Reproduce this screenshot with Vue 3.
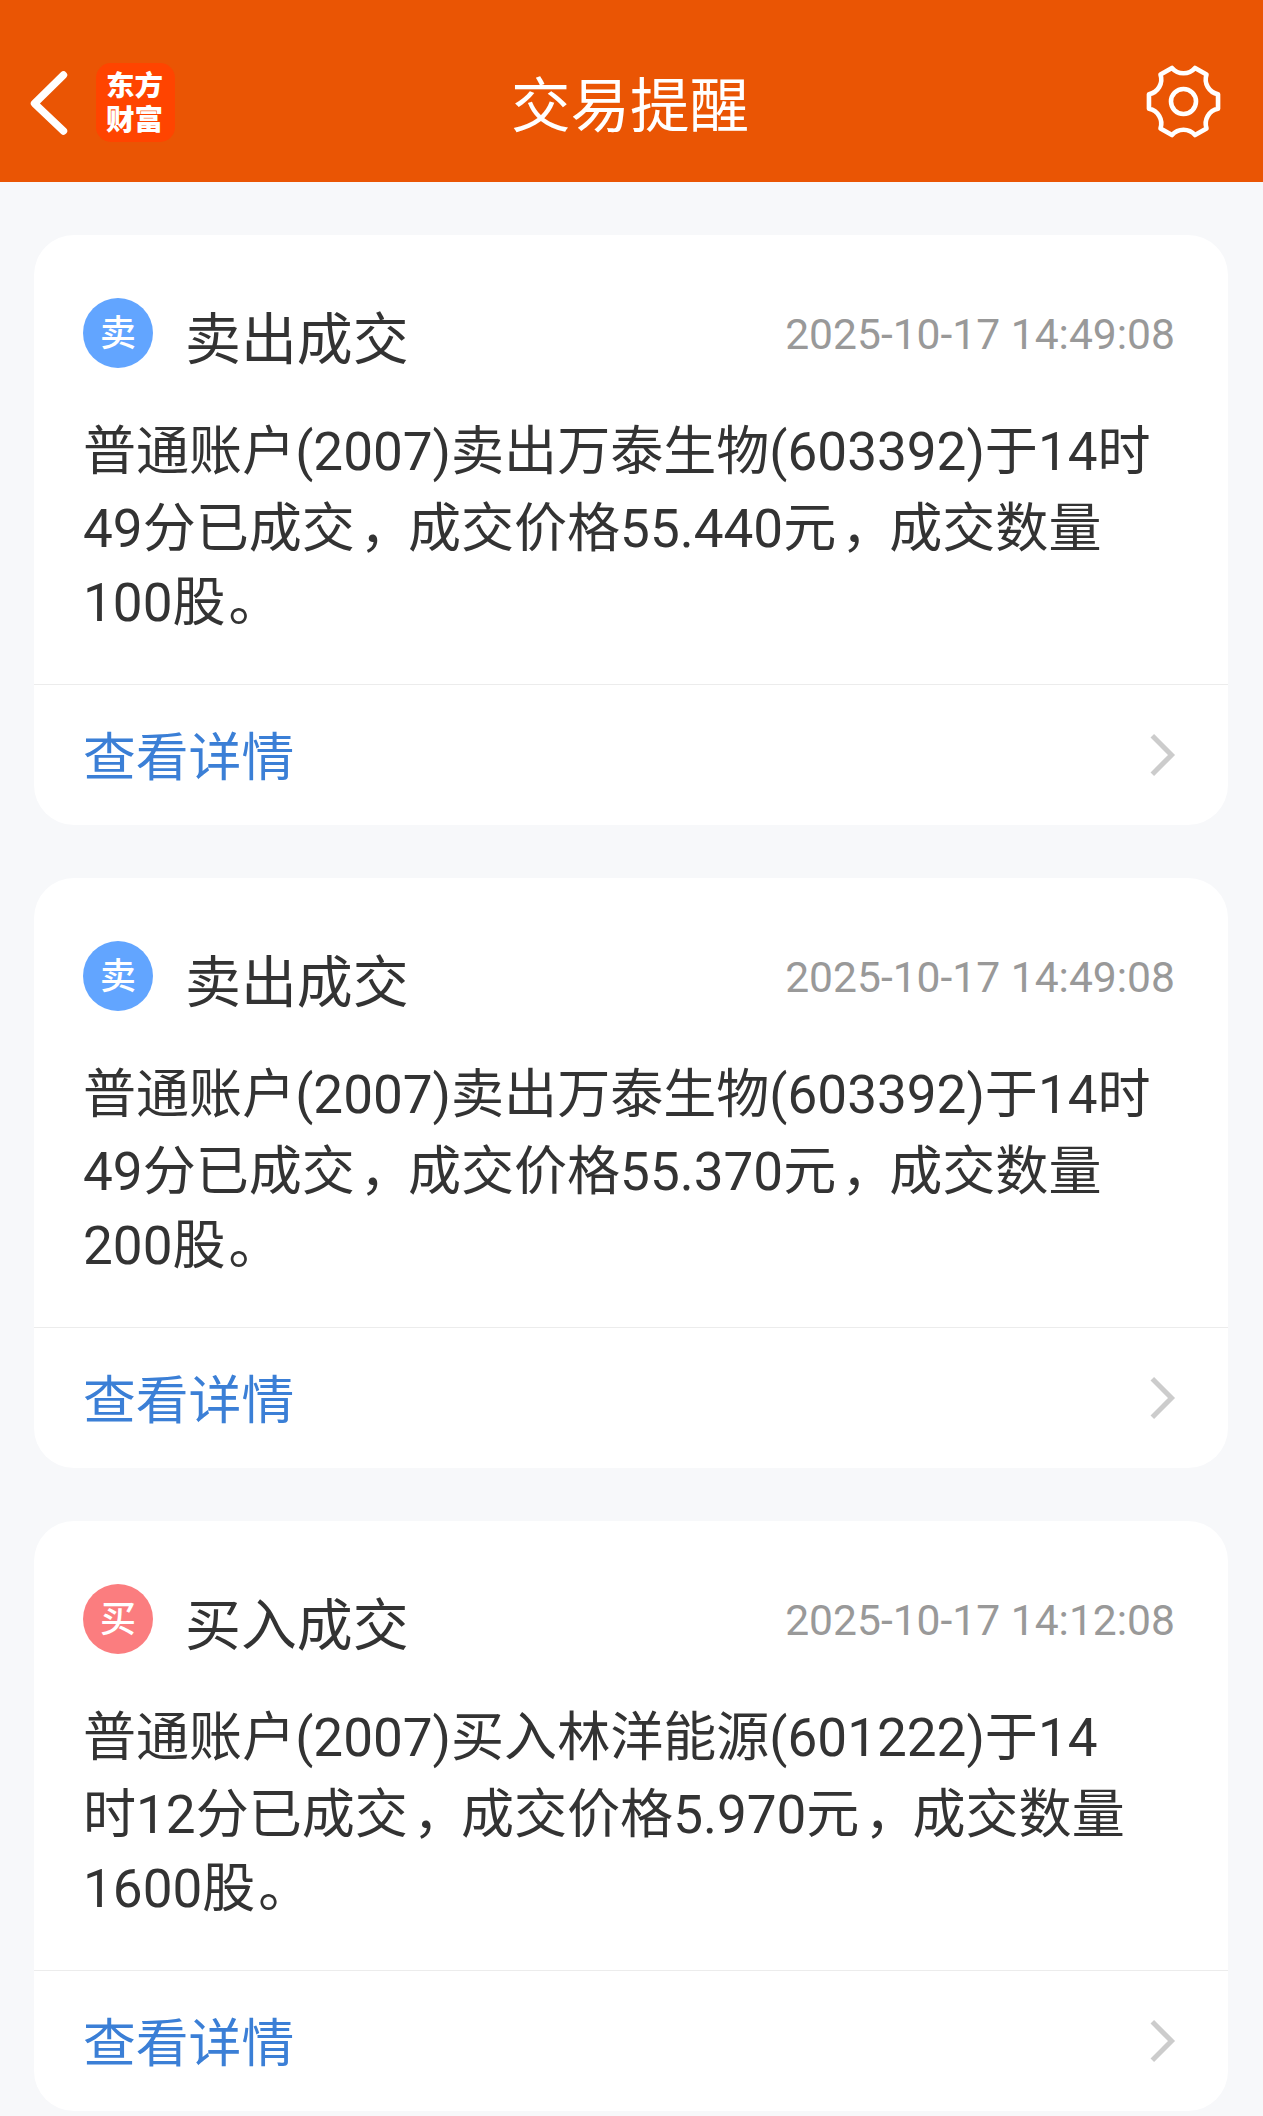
<script setup>
const notices = [
  {
    kind: 'sell',
    badge: '卖',
    title: '卖出成交',
    time: '2025-10-17 14:49:08',
    lines: ['普通账户(2007)卖出万泰生物(603392)于14时', '49分已成交，成交价格55.440元，成交数量', '100股。'],
  },
  {
    kind: 'sell',
    badge: '卖',
    title: '卖出成交',
    time: '2025-10-17 14:49:08',
    lines: ['普通账户(2007)卖出万泰生物(603392)于14时', '49分已成交，成交价格55.370元，成交数量', '200股。'],
  },
  {
    kind: 'buy',
    badge: '买',
    title: '买入成交',
    time: '2025-10-17 14:12:08',
    lines: ['普通账户(2007)买入林洋能源(601222)于14', '时12分已成交，成交价格5.970元，成交数量', '1600股。'],
  },
]

// Full-width punctuation is split out so it can sit slightly further right in its cell.
const parts = (line) => line.split(/([，。])/).filter(Boolean)
const markClass = (part) => ({ comma: part === '，', stop: part === '。' })
</script>

<template>
  <div class="page" lang="zh-CN">
    <header class="bar">
      <div class="side">
        <svg class="back" viewBox="0 0 40 68" fill="none" stroke="#fff" stroke-width="7.4" stroke-linecap="round" stroke-linejoin="round">
          <path d="M35.5 6 6.5 34.5l29 27.5" />
        </svg>
        <div class="logo"><span>东方</span><span>财富</span></div>
      </div>
      <h1>交易提醒</h1>
      <div class="side end">
        <svg class="gear" viewBox="-114 -114 228 228" fill="none" stroke="#fff" stroke-width="14" stroke-linejoin="round">
          <path d="M-35-102A46 46 0 0 0 35-102L70-82A46 46 0 0 0 105-22V22A46 46 0 0 0 70 82L35 102A46 46 0 0 0-35 102L-70 82A46 46 0 0 0-105 22V-22A46 46 0 0 0-70-82Z" />
          <circle r="38" />
        </svg>
      </div>
    </header>

    <main class="list">
      <article v-for="(n, i) in notices" :key="i" class="card">
        <div class="head">
          <span class="badge" :class="n.kind">{{ n.badge }}</span>
          <h2>{{ n.title }}</h2>
          <time>{{ n.time }}</time>
        </div>
        <div class="body">
          <p v-for="line in n.lines" :key="line"><span v-for="(part, k) in parts(line)" :key="k" :class="markClass(part)">{{ part }}</span></p>
        </div>
        <a class="more">
          <span>查看详情</span>
          <svg class="chevron" viewBox="0 0 26 44" fill="none" stroke="#ccc" stroke-width="5">
            <path d="M2.3 2.8 21.5 22 2.3 41.2" />
          </svg>
        </a>
      </article>
    </main>
  </div>
</template>

<style>
body {
  margin: 0;
  background: #f7f8fa;
}
</style>

<style scoped>
.page {
  width: 1263px;
  height: 2116px;
  overflow: hidden;
  background: #f7f8fa;
  color: #333;
  font-family: Roboto, "Noto Sans CJK SC", sans-serif;
}
.bar {
  box-sizing: border-box;
  height: 182px;
  padding: 23px 36px 0 28px;
  display: flex;
  align-items: center;
  background: #ea5504;
  color: #fff;
}
.side {
  flex: 1;
  display: flex;
  align-items: center;
}
.end {
  justify-content: flex-end;
}
.back {
  width: 40px;
  height: 68px;
}
.logo {
  box-sizing: border-box;
  width: 79px;
  height: 79px;
  margin-left: 28px;
  padding: 2px 2px 0 0;
  border-radius: 15px;
  background: #ff4400;
  display: flex;
  flex-direction: column;
  align-items: center;
  justify-content: center;
  font-size: 28.5px;
  font-weight: 900;
  line-height: 34px;
}
h1 {
  margin: 0;
  padding: 8px 0 0 5px;
  font-size: 59.5px;
  line-height: 80px;
  font-weight: 400;
}
.gear {
  width: 75px;
  height: 75px;
  margin-right: 6px;
  margin-top: -3px;
}
.list {
  display: flex;
  flex-direction: column;
  gap: 53px;
  padding: 53px 35px 0 34px;
}
.card {
  height: 590px;
  box-sizing: border-box;
  border-radius: 40px;
  background: #fff;
  display: flex;
  flex-direction: column;
}
.head {
  display: flex;
  align-items: center;
  height: 70px;
  padding: 63px 53px 0 49px;
}
.badge {
  width: 70px;
  height: 70px;
  border-radius: 50%;
  color: #fff;
  font-size: 36px;
  font-weight: 500;
  line-height: 73px;
  text-align: center;
}
.sell {
  background: #62a5ff;
}
.buy {
  background: #fb7d7f;
}
h2 {
  margin: 0 auto 0 32px;
  padding-top: 14px;
  font-size: 55.9px;
  line-height: 70px;
  font-weight: 400;
}
time {
  color: #999;
  font-size: 42.6px;
  line-height: 70px;
  padding-top: 2px;
}
.body {
  flex: 1;
  padding: 46px 0 0 49px;
  font-size: 53.06px;
}
p {
  margin: 0;
  line-height: 76px;
  white-space: nowrap;
}
p:first-child {
  line-height: 77px;
}
p:last-child {
  line-height: 73px;
}
.comma {
  margin: 0 -5px 0 5px;
}
.stop {
  margin: 0 -3px 0 3px;
}
.more {
  box-sizing: border-box;
  height: 141px;
  padding: 0 52px 0 49px;
  border-top: 1px solid #ececec;
  display: flex;
  align-items: center;
  justify-content: space-between;
  color: #3b7fd6;
  font-size: 52.8px;
  line-height: 80px;
}
.more span {
  padding-top: 5px;
}
.chevron {
  width: 26px;
  height: 44px;
}
</style>
